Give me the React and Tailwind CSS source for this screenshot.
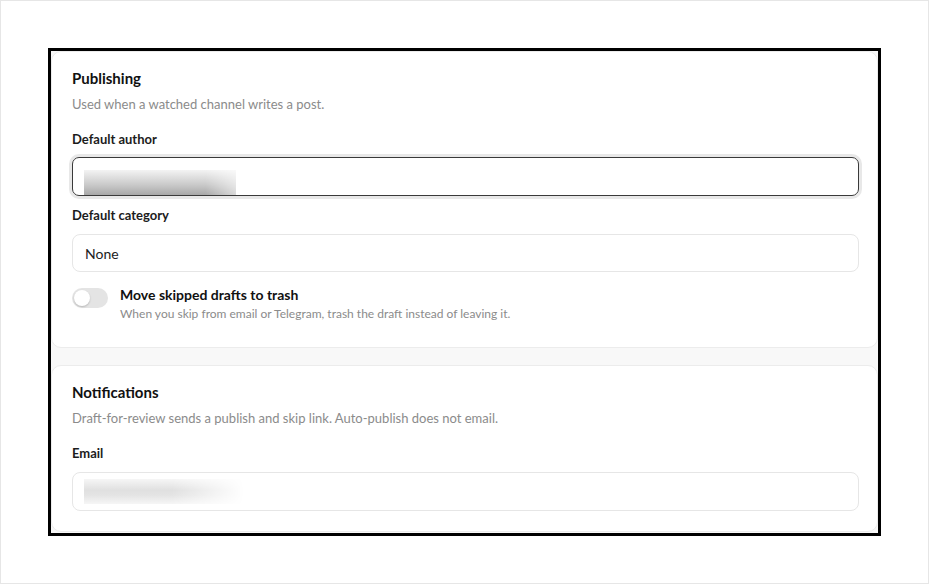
import React from "react";

const font = { fontFamily: "Lato, 'Noto Sans', sans-serif" };

function Label({ children, className = "" }) {
  return (
    <div className={"text-[13px] leading-5 font-bold text-[#1c1c1c] " + className}>
      {children}
    </div>
  );
}

export default function App() {
  return (
    <div
      className="w-[929px] h-[584px] bg-white border border-[#e6e6e6] p-[47px] box-border"
      style={font}
    >
      <div className="w-[833px] h-[488px] border-[3px] border-black bg-[#f8f8f8] overflow-hidden flex flex-col gap-[17px]">
        {/* Publishing card */}
        <div className="bg-white border border-[#ececec] rounded-[10px] pl-5 pr-[18px] pt-4 pb-[25px] shrink-0">
          <div className="text-[15px] leading-5 font-bold text-[#111]">Publishing</div>
          <div className="mt-[6px] text-[13px] leading-5 text-[#8b8b8b]">
            Used when a watched channel writes a post.
          </div>
          <Label className="mt-[15px]">Default author</Label>
          <div className="mt-2 h-[39px] rounded-[7px] border border-[#3a3a3a] shadow-[0_0_0_3px_#e8e8e8] flex items-end pl-[11px] overflow-hidden">
            <div className="w-[152px] h-[25px] bg-[linear-gradient(to_bottom,#f3f3f3,#c9c9c9_60%,#a8a8a8)] [mask-image:linear-gradient(to_right,#000_80%,rgba(0,0,0,0.45))]" />
          </div>
          <Label className="mt-[9px]">Default category</Label>
          <div className="mt-[9px] h-[38px] rounded-[8px] border border-[#e6e6e6] flex items-center px-3 text-[14px] text-[#222]">
            None
          </div>
          <div className="mt-[13px] flex items-start gap-3">
            <div className="mt-[3px] w-9 h-5 rounded-full bg-[#e4e4e4] flex items-center px-[2px] shrink-0">
              <div className="w-4 h-4 rounded-full bg-white shadow-[0_1px_2px_rgba(0,0,0,0.2)]" />
            </div>
            <div>
              <div className="text-[14px] leading-5 font-bold text-[#111]">
                Move skipped drafts to trash
              </div>
              <div className="mt-[1px] text-[12px] leading-4 text-[#8b8b8b]">
                When you skip from email or Telegram, trash the draft instead of leaving it.
              </div>
            </div>
          </div>
        </div>

        {/* Notifications card */}
        <div className="bg-white border border-[#ececec] rounded-[10px] pl-5 pr-[18px] pt-4 pb-5 shrink-0">
          <div className="text-[15px] leading-5 font-bold text-[#111]">Notifications</div>
          <div className="mt-[6px] text-[13px] leading-5 text-[#8b8b8b]">
            Draft-for-review sends a publish and skip link. Auto-publish does not email.
          </div>
          <Label className="mt-[15px]">Email</Label>
          <div className="mt-[9px] h-[39px] rounded-[8px] border border-[#e6e6e6] flex items-center pl-[11px] overflow-hidden">
            <div className="w-[160px] h-[25px] bg-[linear-gradient(to_bottom,#f6f6f6,#e0e0e0_45%,#e4e4e4_65%,#f6f6f6)] [mask-image:linear-gradient(to_right,#000_55%,transparent)]" />
          </div>
        </div>
      </div>
    </div>
  );
}
